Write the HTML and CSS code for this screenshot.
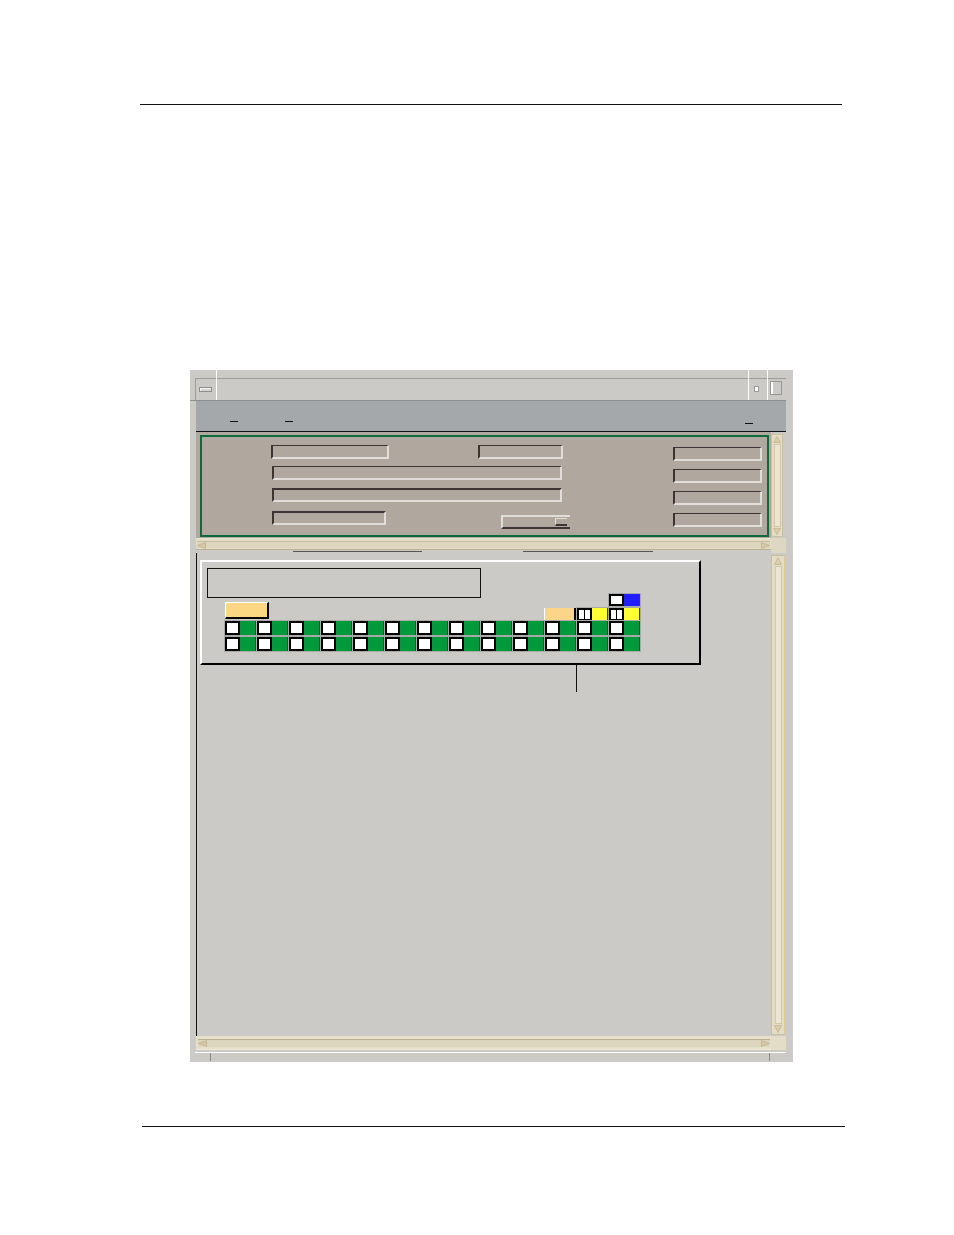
FILE: index.html
```html
<!DOCTYPE html>
<html>
<head>
<meta charset="utf-8">
<title>Window</title>
<link rel="stylesheet" href="styles.css">
</head>
<body>
<div class="page">
  <div class="rule rule-top"></div>
  <div class="win">
    <div class="titlebar">
      <div class="tb-pad"></div>
      <div class="tb-menu"><div class="tb-menubtn"></div></div>
      <div class="tb-div"></div>
      <div class="tb-fill"></div>
      <div class="tb-div"></div>
      <div class="tb-iconcell"><div class="tb-icon"></div></div>
      <div class="tb-div"></div>
      <div class="tb-maxcell"><div class="tb-max"></div></div>
    </div>
    <div class="menubar">
      <span class="mnem m1"></span><span class="mnem m2"></span><span class="mnem m3"></span>
    </div>
    <div class="upper">
      <div class="form-pane">
        <div class="form-box">
          <div class="col-a">
            <div class="frow r1"><div class="field f-short"></div><div class="field f-mid"></div></div>
            <div class="frow r2"><div class="field f-long"></div></div>
            <div class="frow r3"><div class="field f-long f-thick"></div></div>
            <div class="frow r4"><div class="field f-short2"></div><div class="btn"><span class="btn-mark"></span></div></div>
          </div>
          <div class="col-b">
            <div class="field f-right"></div>
            <div class="field f-right"></div>
            <div class="field f-right"></div>
            <div class="field f-right"></div>
          </div>
        </div>
      </div>
      <div class="vscroll vs-upper">
        <div class="vtrack">
          <svg class="arr" width="8" height="7" viewBox="0 0 8 7"><polygon points="4,0.5 7.5,6.5 0.5,6.5" fill="#d9cdab" stroke="#c4b791" stroke-width="0.8"/></svg>
          <div class="vrail"></div>
          <svg class="arr" width="8" height="7" viewBox="0 0 8 7"><polygon points="0.5,0.5 7.5,0.5 4,6.5" fill="#d9cdab" stroke="#c4b791" stroke-width="0.8"/></svg>
        </div>
      </div>
      <div class="hscroll hs-upper">
        <div class="htrack">
          <div class="htrack-in">
            <svg class="arr" width="9" height="7" viewBox="0 0 9 7"><polygon points="0.5,3.5 8.5,0.5 8.5,6.5" fill="#d4c8a7" stroke="#bfb28d" stroke-width="0.8"/></svg>
            <svg class="arr" width="9" height="7" viewBox="0 0 9 7"><polygon points="0.5,0.5 8.5,3.5 0.5,6.5" fill="#d4c8a7" stroke="#bfb28d" stroke-width="0.8"/></svg>
          </div>
        </div>
        <div class="sash"><span class="sash-line s1"></span><span class="sash-line s2"></span></div>
      </div>
      <div class="corner"></div>
    </div>
    <div class="lower">
      <div class="canvas">
        <div class="group">
          <div class="textbox"></div>
          <div class="cells">
            <div class="pair blue top-row"><span class="w"></span><span class="c"></span></div>
            <div class="swatch-big"></div>
            <div class="swatch-small"></div>
            <div class="pair yellow split c12"><span class="w"></span><span class="c"></span></div>
            <div class="pair yellow split c13"><span class="w"></span><span class="c"></span></div>

            <div class="pair green g3"><span class="w"></span><span class="c"></span></div>
            <div class="pair green g3"><span class="w"></span><span class="c"></span></div>
            <div class="pair green g3"><span class="w"></span><span class="c"></span></div>
            <div class="pair green g3"><span class="w"></span><span class="c"></span></div>
            <div class="pair green g3"><span class="w"></span><span class="c"></span></div>
            <div class="pair green g3"><span class="w"></span><span class="c"></span></div>
            <div class="pair green g3"><span class="w"></span><span class="c"></span></div>
            <div class="pair green g3"><span class="w"></span><span class="c"></span></div>
            <div class="pair green g3"><span class="w"></span><span class="c"></span></div>
            <div class="pair green g3"><span class="w"></span><span class="c"></span></div>
            <div class="pair green g3"><span class="w"></span><span class="c"></span></div>
            <div class="pair green g3"><span class="w"></span><span class="c"></span></div>
            <div class="pair green g3"><span class="w"></span><span class="c"></span></div>

            <div class="pair green g4"><span class="w"></span><span class="c"></span></div>
            <div class="pair green g4"><span class="w"></span><span class="c"></span></div>
            <div class="pair green g4"><span class="w"></span><span class="c"></span></div>
            <div class="pair green g4"><span class="w"></span><span class="c"></span></div>
            <div class="pair green g4"><span class="w"></span><span class="c"></span></div>
            <div class="pair green g4"><span class="w"></span><span class="c"></span></div>
            <div class="pair green g4"><span class="w"></span><span class="c"></span></div>
            <div class="pair green g4"><span class="w"></span><span class="c"></span></div>
            <div class="pair green g4"><span class="w"></span><span class="c"></span></div>
            <div class="pair green g4"><span class="w"></span><span class="c"></span></div>
            <div class="pair green g4"><span class="w"></span><span class="c"></span></div>
            <div class="pair green g4"><span class="w"></span><span class="c"></span></div>
            <div class="pair green g4"><span class="w"></span><span class="c"></span></div>
          </div>
        </div>
        <div class="stem"></div>
      </div>
      <div class="vscroll vs-lower">
        <div class="vtrack">
          <svg class="arr" width="8" height="8" viewBox="0 0 8 8"><polygon points="4,0.5 7.5,7.5 0.5,7.5" fill="#d9cdab" stroke="#c4b791" stroke-width="0.8"/></svg>
          <div class="vrail"></div>
          <svg class="arr" width="8" height="8" viewBox="0 0 8 8"><polygon points="0.5,0.5 7.5,0.5 4,7.5" fill="#d9cdab" stroke="#c4b791" stroke-width="0.8"/></svg>
        </div>
      </div>
      <div class="hscroll hs-lower">
        <div class="htrack">
          <div class="htrack-in">
            <svg class="arr" width="9" height="7" viewBox="0 0 9 7"><polygon points="0.5,3.5 8.5,0.5 8.5,6.5" fill="#d4c8a7" stroke="#bfb28d" stroke-width="0.8"/></svg>
            <svg class="arr" width="9" height="7" viewBox="0 0 9 7"><polygon points="0.5,0.5 8.5,3.5 0.5,6.5" fill="#d4c8a7" stroke="#bfb28d" stroke-width="0.8"/></svg>
          </div>
        </div>
      </div>
      <div class="corner corner-lower"></div>
    </div>
    <div class="winfoot"><span class="tick t1"></span><span class="tick t2"></span></div>
  </div>
  <div class="rule rule-bottom"></div>
</div>
</body>
</html>
```

FILE: styles.css
```css
html, body {
  margin: 0;
  padding: 0;
  background: #ffffff;
  font-family: "Liberation Sans", Arial, sans-serif;
}

.page {
  width: 954px;
  height: 1235px;
  overflow: hidden;
  display: flow-root;
}

.rule {
  height: 1px;
  background: #111;
}
.rule-top {
  margin: 104px 0 0 140px;
  width: 702px;
}
.rule-bottom {
  margin: 64px 0 0 142px;
  width: 703px;
}

/* ---------- window ---------- */
.win {
  margin: 265px 0 0 190px;
  width: 603px;
  height: 692px;
  background: #cccac7;
  display: flex;
  flex-direction: column;
}

.titlebar {
  display: flex;
  width: 596px;
  height: 30px;
  flex: none;
  border-bottom: 1px solid #8e8e8e;
  background: linear-gradient(#cccac7 8px, #9c9c9c 8px, #9c9c9c 9px, #cccac7 9px);
}
.tb-pad {
  width: 5px;
  background: #cccac7;
}
.tb-menu {
  width: 21px;
  background:
    linear-gradient(90deg, #9c9c9c 1px, transparent 1px) 0 8px / 100% 100% no-repeat,
    linear-gradient(#cccac7 8px, #9c9c9c 8px, #9c9c9c 9px, #cccac7 9px);
}
.tb-menubtn {
  width: 13px;
  height: 5px;
  margin: 17px 0 0 4px;
  box-sizing: border-box;
  border: 1px solid #8c8c8c;
  background: #d8d6d2;
  box-shadow: inset 1px 1px 0 #f4f4f4;
}
.tb-div {
  width: 1px;
  background: #ffffff;
}
.tb-fill {
  flex: 1;
}
.tb-iconcell,
.tb-maxcell {
  width: 18px;
}
.tb-icon {
  width: 5px;
  height: 6px;
  margin: 16px 0 0 5px;
  box-sizing: border-box;
  border: 1px solid #9a9a9a;
  background: #ffffff;
}
.tb-max {
  width: 12px;
  height: 14px;
  margin: 11px 0 0 2px;
  box-sizing: border-box;
  border: 1px solid #979797;
  box-shadow: inset 2px 0 0 #ffffff;
  background: #cccac7;
}

.menubar {
  margin-left: 6px;
  width: 590px;
  height: 30px;
  flex: none;
  background: #a5a8aa;
  border-bottom: 1px solid #111;
  display: flex;
  align-items: flex-start;
}
.mnem {
  width: 8px;
  height: 1px;
  background: #111;
}
.m1 { margin: 20px 0 0 34px; }
.m2 { margin: 20px 0 0 47px; }
.m3 { margin: 22px 33px 0 auto; }

/* ---------- upper form pane ---------- */
.upper {
  margin-left: 6px;
  width: 590px;
  flex: none;
  display: grid;
  grid-template-columns: 575px 15px;
  grid-template-rows: 106px 15px;
}
.form-pane {
  background: #b0a79f;
  padding: 3px 2px 0 4px;
}
.form-box {
  height: 102px;
  box-sizing: border-box;
  border: 2px solid #0d6b3b;
  display: flex;
}
.col-a {
  display: flex;
  flex-direction: column;
  padding: 8px 0 0 69px;
}
.frow {
  display: flex;
  align-items: flex-start;
}
.r2 { margin-top: 7px; }
.r3 { margin-top: 8px; }
.r4 { margin-top: 9px; }

.field {
  height: 14px;
  box-sizing: border-box;
  border-style: solid;
  border-width: 1px 2px 2px 2px;
  border-color: #3d3333 #e2ddd8 #e2ddd8 #3d3333;
}
.f-short { width: 118px; }
.f-mid { width: 85px; margin-left: 89px; }
.f-long { width: 290px; margin-left: 1px; }
.f-thick { border-top-width: 2px; }
.f-short2 { width: 114px; margin-left: 1px; border-top-width: 2px; }

.btn {
  width: 69px;
  height: 14px;
  margin: 4px 0 0 115px;
  box-sizing: border-box;
  border-top: 2px solid #e2ddd8;
  border-left: 2px solid #e2ddd8;
  border-bottom: 2px solid #3d3333;
  display: flex;
  justify-content: flex-end;
  padding: 1px 3px 0 0;
}
.btn-mark {
  width: 12px;
  height: 8px;
  box-sizing: border-box;
  border-top: 1px solid #e2ddd8;
  border-left: 1px solid #e2ddd8;
  border-bottom: 2px solid #3d3333;
}

.col-b {
  margin-left: auto;
  padding: 10px 5px 0 0;
  display: flex;
  flex-direction: column;
  gap: 8px;
}
.f-right { width: 89px; }

/* ---------- scrollbars ---------- */
.vscroll {
  background: #cccac7;
  display: flex;
}
.vs-upper { padding: 2px 3px 1px 0; }
.vs-lower { padding: 2px 1px 1px 0; }
.vtrack {
  flex: 1;
  box-sizing: border-box;
  background: #e3dcc6;
  border: 1px solid #cbbf9d;
  display: flex;
  flex-direction: column;
  align-items: center;
  padding: 1px 0;
}
.vs-lower .vtrack {
  border-right: 1px solid #e3c792;
}
.vrail {
  flex: 1;
  width: 5px;
  margin: 1px 0;
  background: #ebe5d1;
  border: 1px solid #d3c8a6;
}
.arr {
  display: block;
  flex: none;
}

.hscroll {
  display: flex;
  flex-direction: column;
  background: #cccac7;
}
.htrack {
  height: 12px;
  box-sizing: border-box;
  background: #e2dcc6;
  border-top: 1px solid #ece6d3;
  border-bottom: 1px solid #b9b095;
  padding: 2px 1px 1px 1px;
}
.htrack-in {
  height: 100%;
  box-sizing: border-box;
  background: #dcd6bf;
  border-top: 1px solid #c9be9e;
  display: flex;
  justify-content: space-between;
  align-items: center;
}
.sash {
  height: 3px;
  display: flex;
  align-items: flex-start;
}
.sash-line {
  height: 1px;
  margin-top: 1px;
  background: #555;
}
.s1 { width: 129px; margin-left: 97px; }
.s2 { width: 130px; margin-left: 101px; }

.hs-lower .htrack {
  height: 14px;
  padding: 3px 1px 2px 2px;
  border-top: none;
  border-bottom: 1px solid #efe9d7;
  background: #e6e0ca;
}
.hs-lower .htrack-in {
  border-top: 1px solid #b9b095;
}

.corner {
  background: #dcd8c4;
}
.corner-lower {
  background: #e3ddc7;
}

/* ---------- lower canvas ---------- */
.lower {
  margin-left: 6px;
  width: 590px;
  flex: none;
  display: grid;
  grid-template-columns: 575px 15px;
  grid-template-rows: 483px 14px;
}
.canvas {
  border-left: 1px solid #111;
  background: #cccac7;
}
.group {
  margin: 7px 0 0 3px;
  width: 501px;
  height: 105px;
  box-sizing: border-box;
  border-top: 2px solid #ffffff;
  border-left: 2px solid #ffffff;
  border-bottom: 2px solid #000;
  border-right: 2px solid #000;
  display: flow-root;
}
.textbox {
  margin: 6px 0 0 5px;
  width: 274px;
  height: 30px;
  box-sizing: border-box;
  border: 1px solid #111;
}
.cells {
  margin: -5px 0 0 23px;
  display: grid;
  grid-template-columns: repeat(13, 32px);
  grid-template-rows: 14px 14px 16px 16px;
}
.pair {
  display: flex;
  width: 31px;
  height: 14px;
  align-self: start;
  box-shadow: 0 0 0 1px #a9a9a9;
}
.pair .w {
  width: 15px;
  box-sizing: border-box;
  border: 2px solid #000;
  background: #ffffff;
}
.pair .c {
  width: 16px;
  box-sizing: border-box;
  border-right: 1px solid #3c3c3c;
}
.green .c { background: #009a3a; }
.yellow .c { background: #ffff33; }
.blue .c { background: #1e1eff; }

.split .w {
  background: linear-gradient(90deg, #fff 5px, #000 5px, #000 6px, #fff 6px);
}

.g3 { grid-row: 3; }
.g4 { grid-row: 4; }

.top-row {
  grid-row: 1;
  grid-column: 13;
  height: 12px;
  margin-top: 1px;
}
.c12 {
  grid-row: 2;
  grid-column: 12;
  height: 13px;
  margin-top: 1px;
}
.c13 {
  grid-row: 2;
  grid-column: 13;
  height: 13px;
  margin-top: 1px;
}
.swatch-big {
  grid-row: 2;
  grid-column: 1 / span 2;
  align-self: start;
  width: 44px;
  height: 17px;
  margin-top: -5px;
  box-sizing: border-box;
  background: #fcd783;
  border-top: 1px solid #fff;
  border-left: 1px solid #fff;
  border-right: 2px solid #000;
  border-bottom: 2px solid #000;
}
.swatch-small {
  grid-row: 2;
  grid-column: 11;
  align-self: start;
  width: 32px;
  height: 13px;
  margin: 1px 0 0 -1px;
  box-sizing: border-box;
  background: #fbd68a;
  border-left: 1px solid #fff;
  border-right: 2px solid #000;
  border-bottom: 1px solid #555;
}
.stem {
  margin-left: 379px;
  width: 1px;
  height: 27px;
  background: #111;
}

/* ---------- window foot ---------- */
.winfoot {
  margin-left: 5px;
  width: 591px;
  height: 12px;
  flex: none;
  display: flex;
  align-items: flex-start;
  background: linear-gradient(#cccac7 2px, #ffffff 2px, #ffffff 3px, #cccac7 3px);
}
.tick {
  width: 1px;
  height: 8px;
  margin-top: 3px;
  background: #8a8a8a;
}
.t1 { margin-left: 15px; }
.t2 { margin-left: auto; margin-right: 16px; }
```
